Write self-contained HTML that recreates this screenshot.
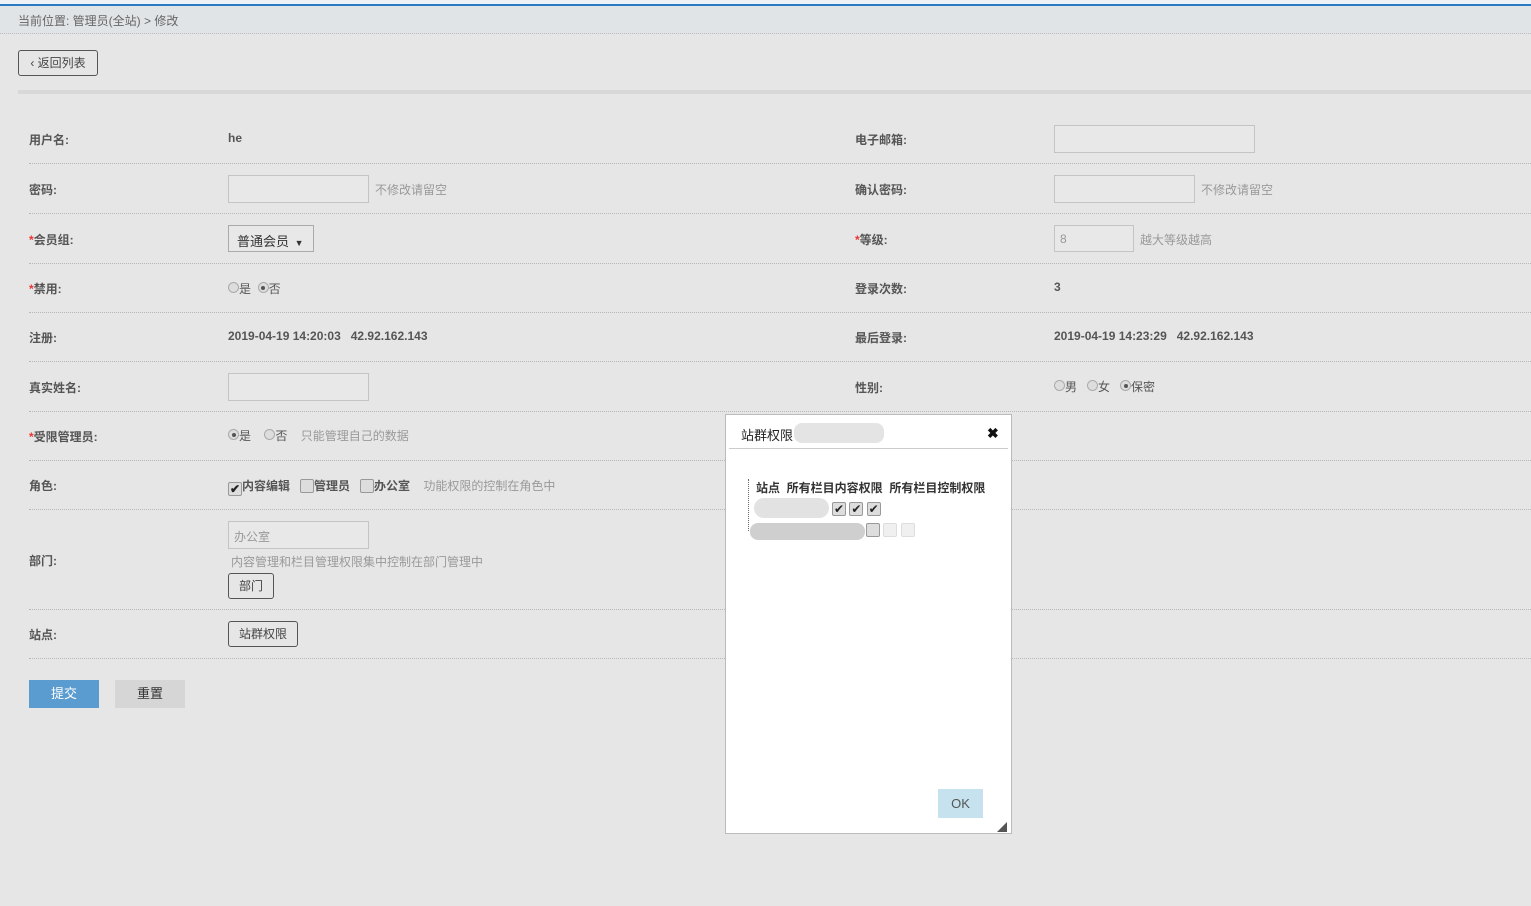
<!DOCTYPE html>
<html><head><meta charset="utf-8"><style>
body{margin:0;width:1531px;height:906px;background:#e6e6e6;font-family:"Liberation Sans","Noto Sans CJK SC",sans-serif;font-size:12px;color:#555;position:relative;overflow:hidden}
.a{position:absolute;white-space:nowrap}
.lbl{font-weight:bold;color:#555}
.line{position:absolute;left:29px;right:0;border-top:1px dotted #b8b8b8;height:0}
.inp{position:absolute;background:#e8e8e8;border:1px solid #c4c4c4;box-sizing:border-box;white-space:nowrap}
.hint{color:#999}
.btn{position:absolute;border:1px solid #555;border-radius:3px;box-sizing:border-box;text-align:center;color:#444}
.rad{display:inline-block;width:11px;height:11px;border:1px solid #aaa;border-radius:50%;background:#ddd;vertical-align:0px;position:relative;box-sizing:border-box}
.rad.on:after{content:"";position:absolute;left:2.5px;top:2.5px;width:4px;height:4px;border-radius:50%;background:#555}
.cb{display:inline-block;width:14px;height:14px;border:1px solid #999;border-radius:2px;background:#ddd;vertical-align:-3px;box-sizing:border-box;font-size:12px;line-height:12px;text-align:center;color:#222}
.red{color:#e33}
</style></head><body>
<div class="a" style="left:0;top:0;width:1531px;height:4px;background:#eef2f7"></div>
<div class="a" style="left:0;top:4px;width:1531px;height:2px;background:#2a7bc4"></div>
<div class="a" style="left:0;top:6px;width:1531px;height:27px;background:#e1e4e7;border-bottom:1px dotted #bbb"></div>
<div class="a" style="left:18px;top:12px;color:#666">当前位置: 管理员(全站) &gt; 修改</div>
<div class="btn" style="left:18px;top:50px;width:80px;height:26px;line-height:24px">‹ 返回列表</div>
<div class="a" style="left:18px;top:90px;width:1513px;height:4px;background:#d8d8d8"></div>

<div class="a lbl" style="left:29px;top:131px">用户名:</div><div class="a lbl" style="left:228px;top:131px">he</div>
<div class="a lbl" style="left:855px;top:131px">电子邮箱:</div><div class="inp" style="left:1054px;top:125px;width:201px;height:28px"></div>
<div class="line" style="top:163px"></div>
<div class="a lbl" style="left:29px;top:181px">密码:</div><div class="inp" style="left:228px;top:175px;width:141px;height:28px"></div><div class="a hint" style="left:375px;top:181px">不修改请留空</div>
<div class="a lbl" style="left:855px;top:181px">确认密码:</div><div class="inp" style="left:1054px;top:175px;width:141px;height:28px"></div><div class="a hint" style="left:1201px;top:181px">不修改请留空</div>
<div class="line" style="top:213px"></div>
<div class="a lbl" style="left:29px;top:231px"><span class="red">*</span>会员组:</div>
<div class="inp" style="left:228px;top:225px;width:86px;height:27px;border-color:#aaa;color:#333;padding:5px 8px;font-size:13px">普通会员 <span style="font-size:9px;margin-left:2px">▼</span></div>
<div class="a lbl" style="left:855px;top:231px"><span class="red">*</span>等级:</div>
<div class="inp" style="left:1054px;top:225px;width:80px;height:27px;color:#999;padding:6px 5px">8</div><div class="a hint" style="left:1140px;top:231px">越大等级越高</div>
<div class="line" style="top:263px"></div>
<div class="a lbl" style="left:29px;top:280px"><span class="red">*</span>禁用:</div>
<div class="a" style="left:228px;top:280px"><span class="rad"></span>是 &nbsp;<span class="rad on"></span>否</div>
<div class="a lbl" style="left:855px;top:280px">登录次数:</div><div class="a lbl" style="left:1054px;top:280px">3</div>
<div class="line" style="top:312px"></div>
<div class="a lbl" style="left:29px;top:329px">注册:</div><div class="a lbl" style="left:228px;top:329px">2019-04-19 14:20:03 &nbsp; 42.92.162.143</div>
<div class="a lbl" style="left:855px;top:329px">最后登录:</div><div class="a lbl" style="left:1054px;top:329px">2019-04-19 14:23:29 &nbsp; 42.92.162.143</div>
<div class="line" style="top:361px"></div>
<div class="a lbl" style="left:29px;top:379px">真实姓名:</div><div class="inp" style="left:228px;top:373px;width:141px;height:28px"></div>
<div class="a lbl" style="left:855px;top:379px">性别:</div>
<div class="a" style="left:1054px;top:378px"><span class="rad"></span>男 &nbsp;&nbsp;<span class="rad"></span>女 &nbsp;&nbsp;<span class="rad on"></span>保密</div>
<div class="line" style="top:411px"></div>
<div class="a lbl" style="left:29px;top:428px"><span class="red">*</span>受限管理员:</div>
<div class="a" style="left:228px;top:427px"><span class="rad on"></span>是 &nbsp;&nbsp;&nbsp;<span class="rad"></span>否 &nbsp;&nbsp;&nbsp;<span class="hint">只能管理自己的数据</span></div>
<div class="line" style="top:460px"></div>
<div class="a lbl" style="left:29px;top:477px">角色:</div>
<div class="a" style="left:228px;top:477px;font-weight:bold"><span class="cb">✔</span>内容编辑 &nbsp;&nbsp;<span class="cb"></span>管理员 &nbsp;&nbsp;<span class="cb"></span>办公室 &nbsp;&nbsp;&nbsp;<span class="hint" style="font-weight:normal">功能权限的控制在角色中</span></div>
<div class="line" style="top:509px"></div>
<div class="inp" style="left:228px;top:521px;width:141px;height:28px;color:#999;padding:6px 5px">办公室</div>
<div class="a hint" style="left:231px;top:553px">内容管理和栏目管理权限集中控制在部门管理中</div>
<div class="btn" style="left:228px;top:573px;width:46px;height:26px;line-height:24px">部门</div>
<div class="a lbl" style="left:29px;top:552px">部门:</div>
<div class="line" style="top:609px"></div>
<div class="a lbl" style="left:29px;top:626px">站点:</div>
<div class="btn" style="left:228px;top:621px;width:70px;height:26px;line-height:24px">站群权限</div>
<div class="line" style="top:658px"></div>
<div class="a" style="left:29px;top:680px;width:70px;height:28px;background:#5a9bd0;color:#fff;text-align:center;line-height:28px;font-size:13px">提交</div>
<div class="a" style="left:115px;top:680px;width:70px;height:28px;background:#d6d6d6;color:#333;text-align:center;line-height:28px;font-size:13px">重置</div>

<div class="a" style="left:725px;top:414px;width:285px;height:418px;background:#fff;border:1px solid #bbb">
 <div class="a" style="left:15px;top:10px;color:#222;font-size:13px">站群权限</div>
 <div class="a" style="left:68px;top:8px;width:90px;height:20px;background:#ddd;border-radius:8px;opacity:.8"></div>
 <div class="a" style="left:261px;top:10px;font-weight:bold;color:#111;font-size:14px">✖</div>
 <div class="a" style="left:3px;top:33px;width:279px;border-top:1px solid #ccc"></div>
 <div class="a" style="left:22px;top:64px;height:52px;border-left:1px dotted #666"></div>
 <div class="a" style="left:30px;top:64px;color:#333;font-weight:bold">站点 &nbsp;所有栏目内容权限 &nbsp;所有栏目控制权限</div>
 <div class="a" style="left:28px;top:83px;width:75px;height:20px;background:#e2e2e2;border-radius:10px"></div>
 <div class="a" style="left:106px;top:84px"><span class="cb">✔</span> <span class="cb">✔</span> <span class="cb">✔</span></div>
 <div class="a" style="left:24px;top:108px;width:115px;height:17px;background:#cfcfcf;border-radius:8px"></div>
 <div class="a" style="left:140px;top:108px"><span class="cb"></span> <span class="cb" style="border-color:#ddd;background:#f0f0f0"></span> <span class="cb" style="border-color:#ddd;background:#f0f0f0"></span></div>
 <div class="a" style="left:212px;top:374px;width:45px;height:29px;background:#c5e2ee;color:#555;text-align:center;line-height:29px;font-size:13px">OK</div>
 <div class="a" style="left:271px;top:404px;color:#555;font-size:10px">◢</div>
</div>
</body></html>
